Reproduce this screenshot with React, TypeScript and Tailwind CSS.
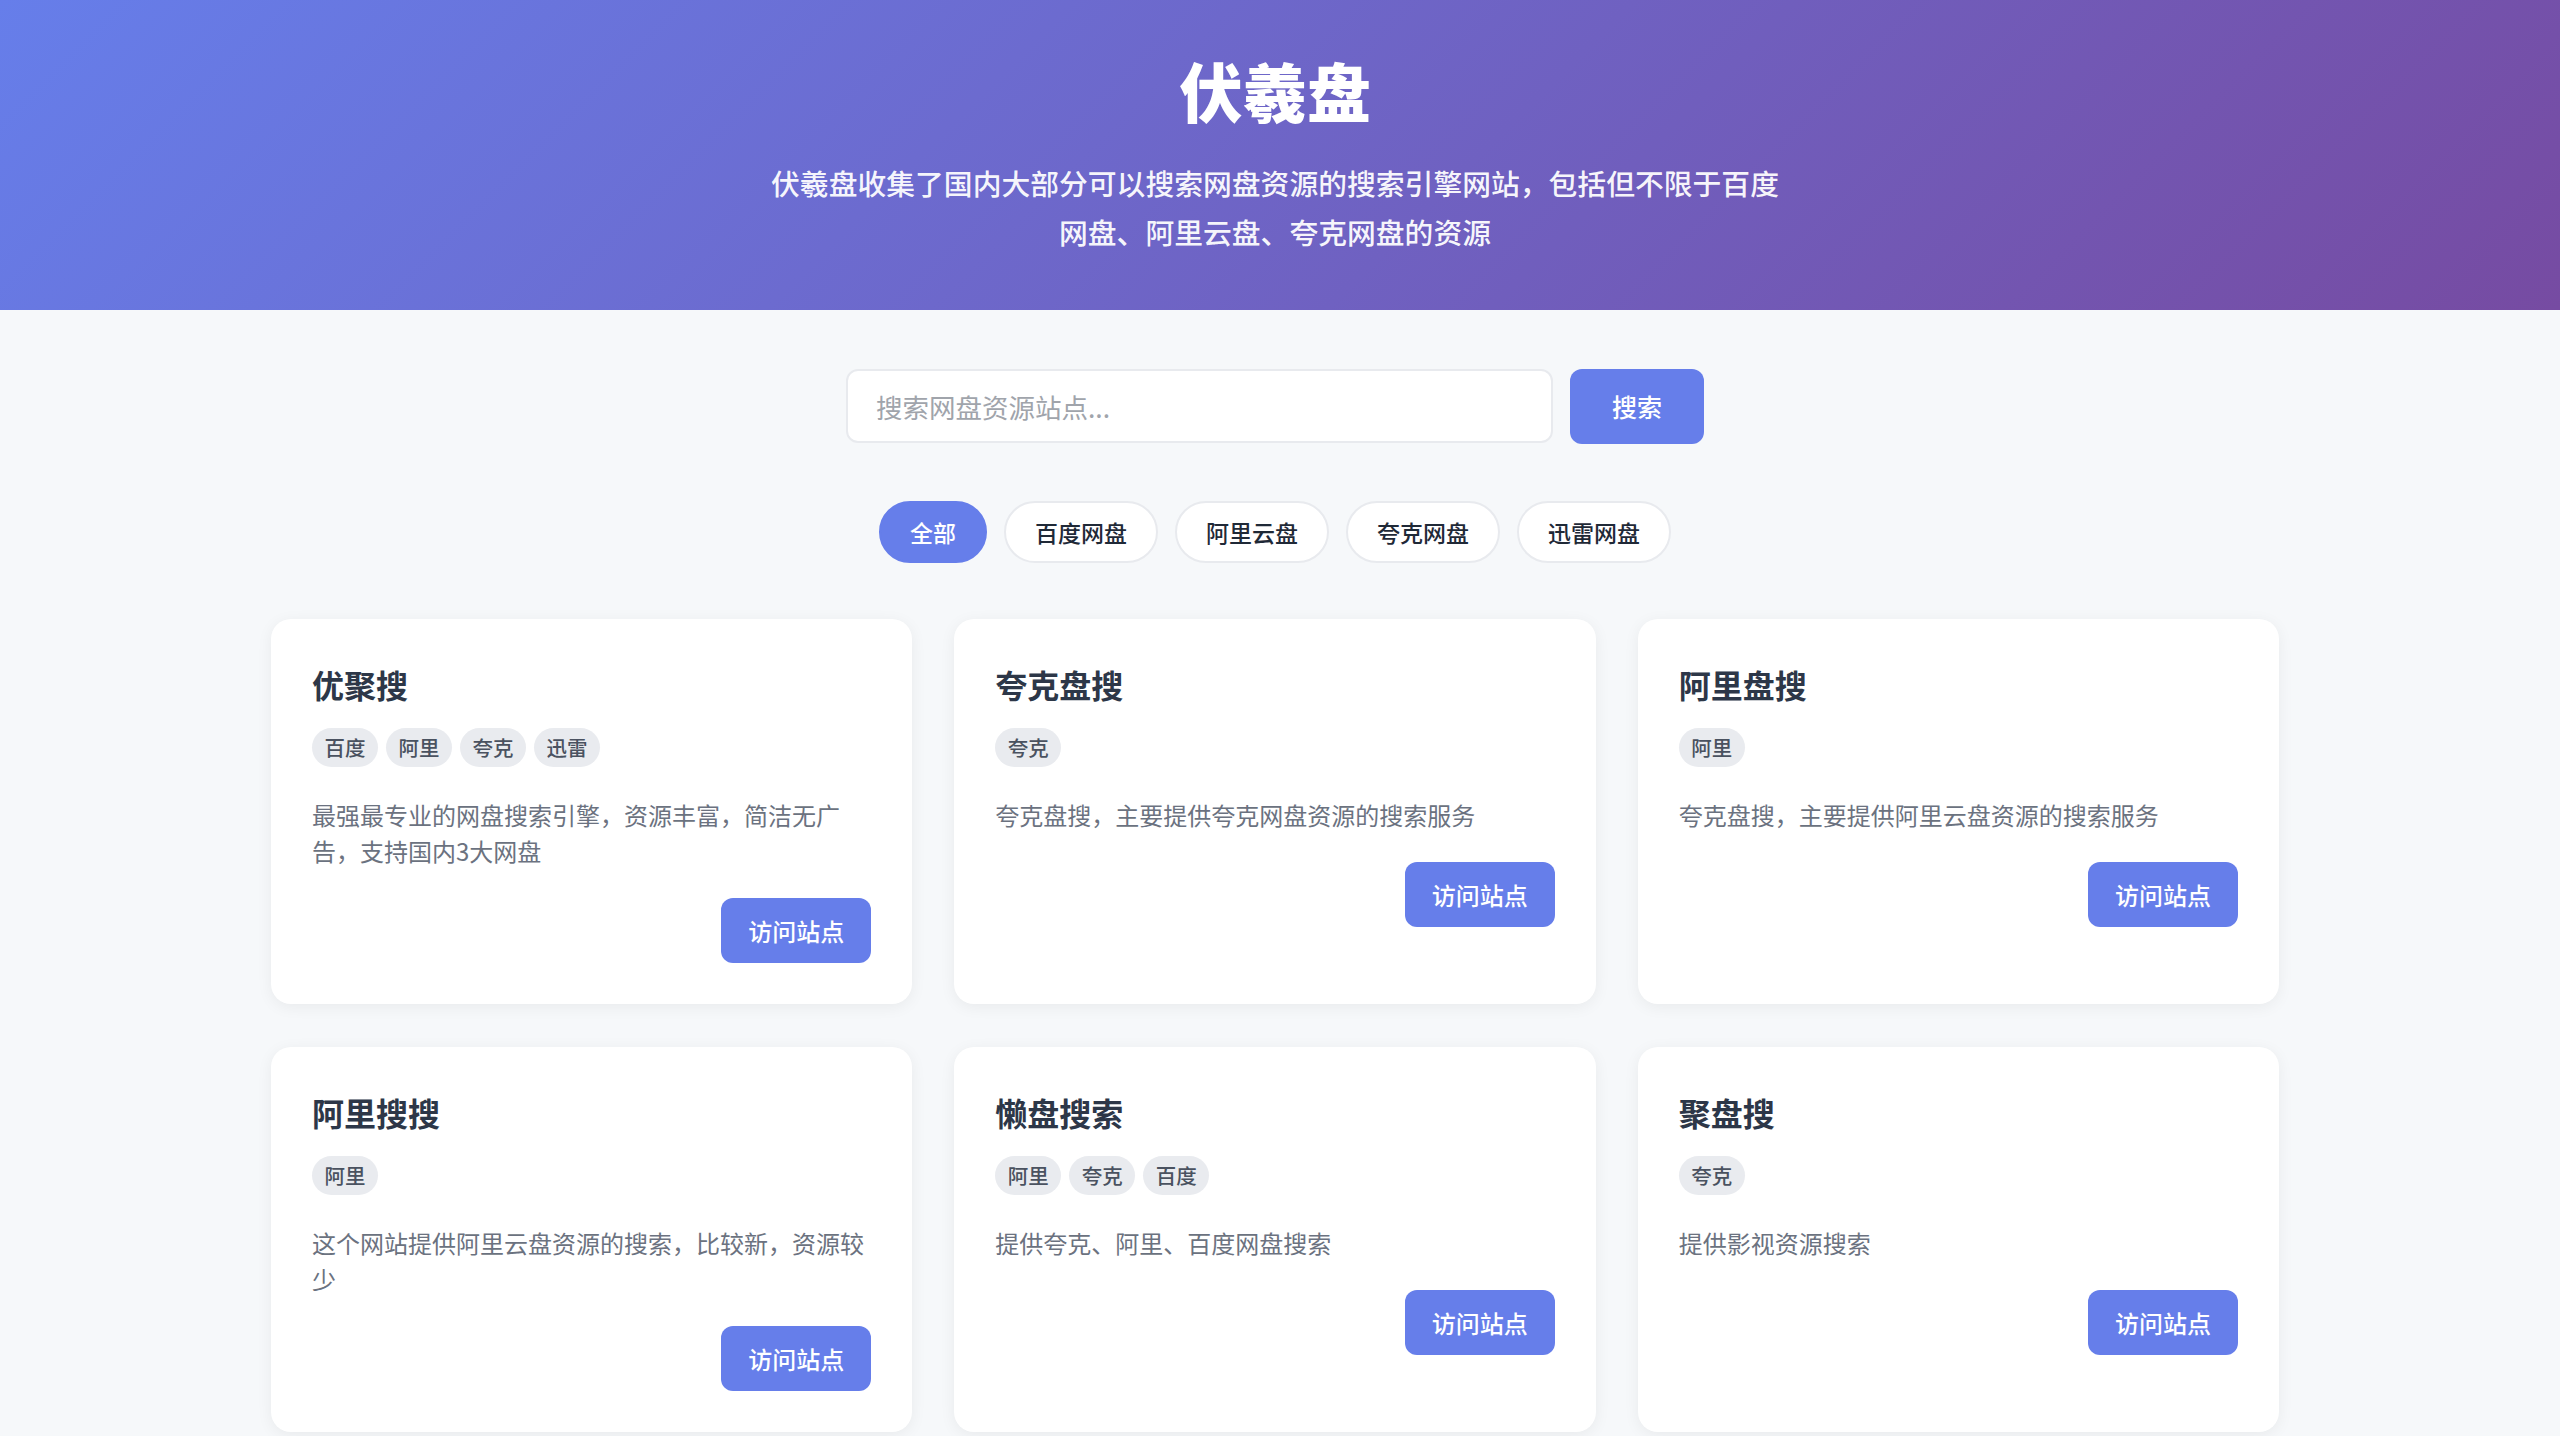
import React, { useState } from 'react';

type Site = {
  name: string;
  tags: string[];
  desc: string;
};

const sites: Site[] = [
  { name: '优聚搜', tags: ['百度', '阿里', '夸克', '迅雷'], desc: '最强最专业的网盘搜索引擎，资源丰富，简洁无广告，支持国内3大网盘' },
  { name: '夸克盘搜', tags: ['夸克'], desc: '夸克盘搜，主要提供夸克网盘资源的搜索服务' },
  { name: '阿里盘搜', tags: ['阿里'], desc: '夸克盘搜，主要提供阿里云盘资源的搜索服务' },
  { name: '阿里搜搜', tags: ['阿里'], desc: '这个网站提供阿里云盘资源的搜索，比较新，资源较少' },
  { name: '懒盘搜索', tags: ['阿里', '夸克', '百度'], desc: '提供夸克、阿里、百度网盘搜索' },
  { name: '聚盘搜', tags: ['夸克'], desc: '提供影视资源搜索' },
];

const filters = ['全部', '百度网盘', '阿里云盘', '夸克网盘', '迅雷网盘'];

const App = () => {
  const [active, setActive] = useState('全部');
  const [query, setQuery] = useState('');

  return (
    <div className="min-h-screen bg-[#f6f8fa] font-['Noto_Sans_CJK_SC',sans-serif]">
      {/* 头部 */}
      <header className="bg-[linear-gradient(135deg,#667eea_0%,#764ba2_100%)] pt-[51px] pb-[54px] pr-[10px] text-center text-white">
        <h1 className="text-[64px] leading-[77px] font-black">伏羲盘</h1>
        <p className="mx-auto mt-[30px] max-w-[1024px] text-[28.8px] leading-[49px] font-medium text-white/95">
          伏羲盘收集了国内大部分可以搜索网盘资源的搜索引擎网站，包括但不限于百度网盘、阿里云盘、夸克网盘的资源
        </p>
      </header>

      <main className="pr-[10px] pb-[60px]">
        {/* 搜索 */}
        <div className="mt-[59px] flex justify-center gap-[17px]">
          <input
            value={query}
            onChange={(e) => setQuery(e.target.value)}
            placeholder="搜索网盘资源站点..."
            className="h-[74px] w-[707px] rounded-[12px] border-2 border-[#e8eaee] bg-white px-[28px] text-[26.5px] text-[#374151] outline-none placeholder:text-[#a0a4ab]"
          />
          <button className="h-[75px] w-[134px] rounded-[12px] bg-[#667eea] text-[25px] font-medium text-white">
            搜索
          </button>
        </div>

        {/* 分类 */}
        <div className="mt-[57px] flex justify-center gap-[17px]">
          {filters.map((f) => (
            <button
              key={f}
              onClick={() => setActive(f)}
              className={
                active === f
                  ? 'h-[62px] rounded-full border-2 border-[#667eea] bg-[#667eea] px-[29px] text-[23px] font-medium text-white'
                  : 'h-[62px] rounded-full border-2 border-[#e8eaee] bg-white px-[29px] text-[23px] font-medium text-[#1f2937]'
              }
            >
              {f}
            </button>
          ))}
        </div>

        {/* 站点列表 */}
        <div className="mx-auto mt-[56px] grid w-[2008px] grid-cols-3 gap-x-[42px] gap-y-[43px]">
          {sites.map((s) => (
            <div key={s.name} className="flex flex-col rounded-[20px] bg-white px-[41px] pt-[41px] pb-[41px] shadow-[0_3px_16px_rgba(0,0,0,0.06)]">
              <h3 className="text-[32px] leading-[48px] font-bold text-[#2d3748]">{s.name}</h3>
              <div className="mt-[20px] flex gap-[8px]">
                {s.tags.map((t) => (
                  <span key={t} className="h-[39px] rounded-full bg-[#e9ebef] px-[12.5px] text-[20.5px] leading-[39px] font-medium text-[#4a5260]">
                    {t}
                  </span>
                ))}
              </div>
              <p className="mt-[30px] text-[24px] leading-[36px] text-[#6b7280]">{s.desc}</p>
              <button className="mt-[29px] h-[65px] w-[150px] self-end rounded-[12px] bg-[#667eea] text-[24px] font-medium text-white">
                访问站点
              </button>
            </div>
          ))}
        </div>
      </main>
    </div>
  );
};

export default App;
